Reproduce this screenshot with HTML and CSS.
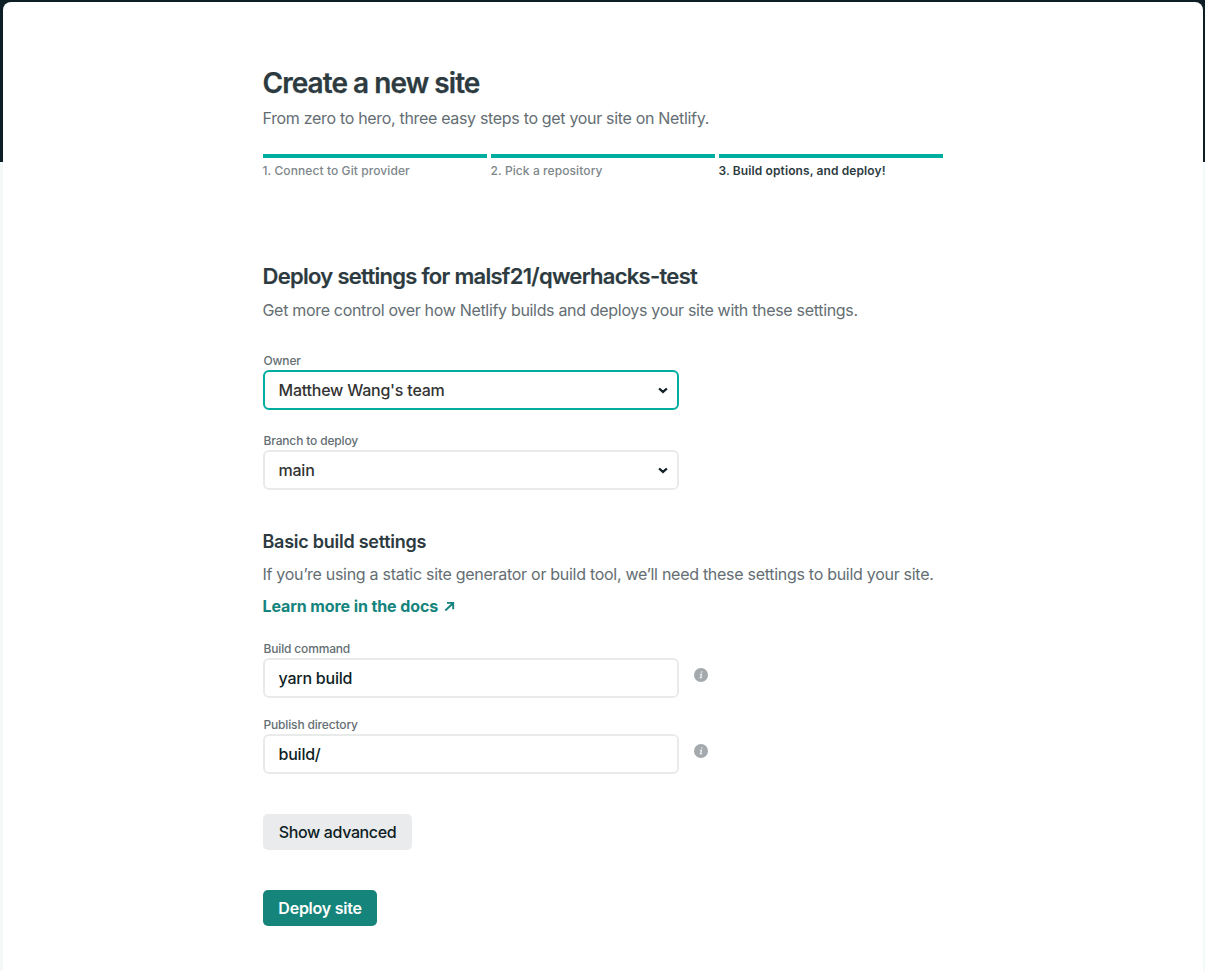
FILE: index.html
```html
<!DOCTYPE html>
<html lang="en">
<head>
<meta charset="utf-8">
<title>Create a new site</title>
<link rel="stylesheet" href="styles.css">
</head>
<body>
<main class="panel">
  <div class="content">
    <header class="intro">
      <h1 class="title">Create a new site</h1>
      <p class="lead">From zero to hero, three easy steps to get your site on Netlify.</p>
      <ol class="steps">
        <li class="step">1. Connect to Git provider</li>
        <li class="step">2. Pick a repository</li>
        <li class="step step-current">3. Build options, and deploy!</li>
      </ol>
    </header>
    <form class="form">
      <h2 class="heading">Deploy settings for malsf21/qwerhacks-test</h2>
      <p class="lead lead-settings">Get more control over how Netlify builds and deploys your site with these settings.</p>
      <div class="field field-owner">
        <label class="label" for="owner">Owner</label>
        <div class="control control-focus">
          <select class="value" id="owner"><option>Matthew Wang's team</option></select>
          <svg class="caret" viewBox="0 0 10 7"><path d="M1.1 1.5 5 4.9 8.9 1.5"/></svg>
        </div>
      </div>
      <div class="field field-branch">
        <label class="label" for="branch">Branch to deploy</label>
        <div class="control">
          <select class="value" id="branch"><option>main</option></select>
          <svg class="caret" viewBox="0 0 10 7"><path d="M1.1 1.5 5 4.9 8.9 1.5"/></svg>
        </div>
      </div>
      <h3 class="subheading">Basic build settings</h3>
      <p class="lead lead-build">If you’re using a static site generator or build tool, we’ll need these settings to build your site.</p>
      <a class="docs"><span>Learn more in the docs</span><svg class="arrow" viewBox="0 0 11 11"><path d="M1.3 9.5 9 2.2M3 1.9H9.2V8.2"/></svg></a>
      <div class="row">
        <div class="field">
          <label class="label" for="command">Build command</label>
          <div class="control"><input class="value value-input" id="command" value="yarn build"></div>
        </div>
        <svg class="info" viewBox="0 0 14 14"><circle cx="7" cy="7" r="7"/><path d="M7.2 3.4h1.4l-.3 1.2H6.9zM5.7 5.8h2.4L7.3 9.6h.9l-.1.6H5.6l.1-.6h.5l.6-3.1H5.6z"/></svg>
      </div>
      <div class="row">
        <div class="field">
          <label class="label" for="directory">Publish directory</label>
          <div class="control"><input class="value value-input" id="directory" value="build/"></div>
        </div>
        <svg class="info" viewBox="0 0 14 14"><circle cx="7" cy="7" r="7"/><path d="M7.2 3.4h1.4l-.3 1.2H6.9zM5.7 5.8h2.4L7.3 9.6h.9l-.1.6H5.6l.1-.6h.5l.6-3.1H5.6z"/></svg>
      </div>
      <div class="actions">
        <button class="button" type="button">Show advanced</button>
        <button class="button button-primary" type="button">Deploy site</button>
      </div>
    </form>
  </div>
</main>
</body>
</html>
```

FILE: styles.css
```css
* { box-sizing: border-box; }
body {
  margin: 0;
  height: 971px;
  padding: 2px 2px 0 3px;
  overflow: hidden;
  background: linear-gradient(#0e1e25 160px, #f3f8f8 160px) 0 2px no-repeat #0e1e25;
  font-family: Inter, "Liberation Sans", sans-serif;
  color: #2d3b41;
}
.panel {
  height: 969px;
  padding: 63px 260px 0;
  border-radius: 8px 8px 0 0;
  background: #fff;
}
.content { width: 680px; }
h1, h2, h3, p, ol { margin: 0; padding: 0; white-space: nowrap; }
h1, h2, h3, .lead, .step, .docs { text-indent: -0.5px; }
.title { font-size: 28px; line-height: 36px; font-weight: 600; letter-spacing: -0.95px; -webkit-text-stroke: 0.25px; }
.lead { margin-top: 5px; font-size: 16px; line-height: 24px; color: #646e73; letter-spacing: -0.32px; }
.steps { display: grid; grid-template-columns: repeat(3, 224px); gap: 4px; margin-top: 24px; list-style: none; }
.step { border-top: 4px solid #00ad9f; padding-top: 3px; font-size: 12px; line-height: 20px; font-weight: 500; letter-spacing: 0.09px; color: #7d868a; }
.step-current { color: #2d3b41; font-weight: 600; letter-spacing: 0.11px; }
.form { display: flex; flex-direction: column; align-items: flex-start; padding-top: 79px; }
.heading { font-size: 22px; line-height: 32px; font-weight: 600; letter-spacing: -0.71px; -webkit-text-stroke: 0.15px; }
.lead-settings { margin-top: 6px; }
.field { display: flex; flex-direction: column; width: 416px; }
.field-owner { margin-top: 30px; }
.field-branch { margin-top: 22px; }
.label { padding-left: 0.5px; font-size: 12px; line-height: 18px; font-weight: 500; letter-spacing: -0.16px; color: #646e73; }
.control { display: flex; align-items: center; width: 416px; height: 40px; border: 2px solid #e9ebeb; border-radius: 6px; background: #fff; }
.control-focus { border-color: #00ad9f; }
.value { appearance: none; flex: 1; width: 380px; height: 36px; padding: 0 0 0 13.5px; border: 0; outline: 0; background: transparent; font: 500 16px/24px Inter, sans-serif; letter-spacing: -0.22px; color: #333; }
.value-input { color: #0e1e25; }
.caret { flex: none; width: 10px; height: 7px; margin-right: 9px; fill: none; stroke: #0e1e25; stroke-width: 2.3; }
.subheading { margin-top: 38px; font-size: 18px; line-height: 28px; font-weight: 600; letter-spacing: -0.26px; }
.lead-build { margin-top: 6px; letter-spacing: -0.285px; }
.docs { display: flex; align-items: center; gap: 6px; margin-top: 8px; font-size: 16px; line-height: 24px; font-weight: 700; letter-spacing: -0.1px; color: #15847d; }
.arrow { width: 11px; height: 11px; fill: none; stroke: currentColor; stroke-width: 1.9; }
.row { display: flex; gap: 15px; margin-top: 18px; }
.docs + .row { margin-top: 22px; }
.info { width: 14px; height: 14px; margin-top: 28px; fill: #a3a9ac; }
.info path { fill: #fff; }
.actions { display: flex; flex-direction: column; align-items: flex-start; gap: 40px; margin-top: 40px; }
.button { height: 36px; width: 149px; padding: 0; border: 0; border-radius: 5px; background: #e9ebec; color: #0e1e25; font: 500 16px/24px Inter, sans-serif; letter-spacing: -0.36px; }
.button-primary { width: 114px; background: #15847a; color: #fff; font-weight: 600; letter-spacing: -0.25px; }
```
